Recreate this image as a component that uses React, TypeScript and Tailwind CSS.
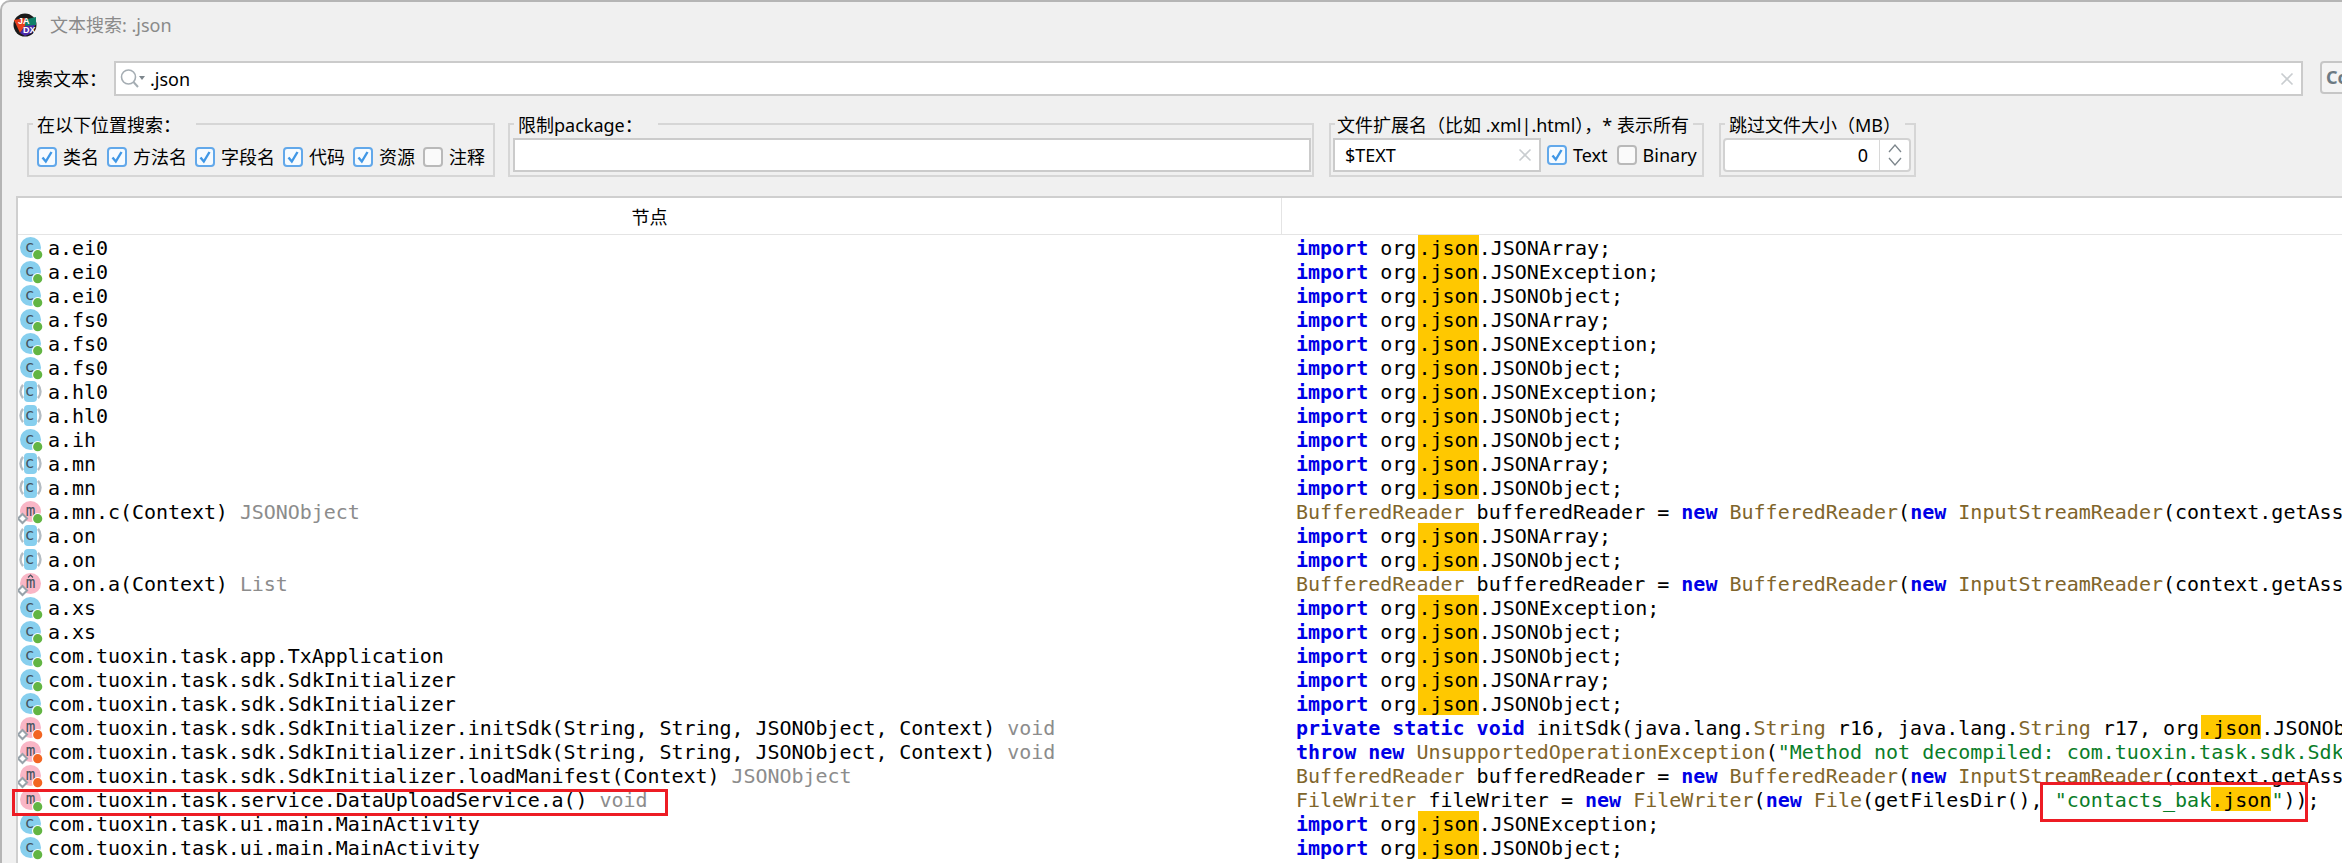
import React from 'react';

type Tok = { t: string; c?: 'k' | 'y' | 's' | 'h' | 'g' };
const k = (t: string): Tok => ({ t, c: 'k' });
const y = (t: string): Tok => ({ t, c: 'y' });
const s = (t: string): Tok => ({ t, c: 's' });
const h = (t: string): Tok => ({ t, c: 'h' });
const g = (t: string): Tok => ({ t, c: 'g' });
const p = (t: string): Tok => ({ t });

const imp = (n: string): Tok[] => [k('import'), p(' org'), g('.json'), p('.' + n + ';')];
const buffered: Tok[] = [
  y('BufferedReader'), p(' bufferedReader = '), k('new'), p(' '), y('BufferedReader'), p('('), k('new'), p(' '),
  y('InputStreamReader'), p('(context.getAssets().open("manifest.json")));'),
];

type Icon = 'c' | 'a' | 'mg' | 'mh' | 'mo' | 'mp';
const rows: { icon: Icon; name: string; ret?: string; code: Tok[] }[] = [
  { icon: 'c', name: 'a.ei0', code: imp('JSONArray') },
  { icon: 'c', name: 'a.ei0', code: imp('JSONException') },
  { icon: 'c', name: 'a.ei0', code: imp('JSONObject') },
  { icon: 'c', name: 'a.fs0', code: imp('JSONArray') },
  { icon: 'c', name: 'a.fs0', code: imp('JSONException') },
  { icon: 'c', name: 'a.fs0', code: imp('JSONObject') },
  { icon: 'a', name: 'a.hl0', code: imp('JSONException') },
  { icon: 'a', name: 'a.hl0', code: imp('JSONObject') },
  { icon: 'c', name: 'a.ih', code: imp('JSONObject') },
  { icon: 'a', name: 'a.mn', code: imp('JSONArray') },
  { icon: 'a', name: 'a.mn', code: imp('JSONObject') },
  { icon: 'mg', name: 'a.mn.c(Context)', ret: 'JSONObject', code: buffered },
  { icon: 'a', name: 'a.on', code: imp('JSONArray') },
  { icon: 'a', name: 'a.on', code: imp('JSONObject') },
  { icon: 'mh', name: 'a.on.a(Context)', ret: 'List', code: buffered },
  { icon: 'c', name: 'a.xs', code: imp('JSONException') },
  { icon: 'c', name: 'a.xs', code: imp('JSONObject') },
  { icon: 'c', name: 'com.tuoxin.task.app.TxApplication', code: imp('JSONObject') },
  { icon: 'c', name: 'com.tuoxin.task.sdk.SdkInitializer', code: imp('JSONArray') },
  { icon: 'c', name: 'com.tuoxin.task.sdk.SdkInitializer', code: imp('JSONObject') },
  {
    icon: 'mo', name: 'com.tuoxin.task.sdk.SdkInitializer.initSdk(String, String, JSONObject, Context)', ret: 'void',
    code: [k('private static void'), p(' initSdk(java.lang.'), y('String'), p(' r16, java.lang.'), y('String'), p(' r17, org'), g('.json'), p('.JSONObject r18, android.content.Context r19) {')],
  },
  {
    icon: 'mo', name: 'com.tuoxin.task.sdk.SdkInitializer.initSdk(String, String, JSONObject, Context)', ret: 'void',
    code: [k('throw new'), p(' '), y('UnsupportedOperationException'), p('('), s('"Method not decompiled: com.tuoxin.task.sdk.SdkInitializer.initSdk"'), p(');')],
  },
  { icon: 'mo', name: 'com.tuoxin.task.sdk.SdkInitializer.loadManifest(Context)', ret: 'JSONObject', code: buffered },
  {
    icon: 'mp', name: 'com.tuoxin.task.service.DataUploadService.a()', ret: 'void',
    code: [y('FileWriter'), p(' fileWriter = '), k('new'), p(' '), y('FileWriter'), p('('), k('new'), p(' '), y('File'), p('(getFilesDir(), '), s('"contacts_bak'), h('.json'), s('"'), p('));')],
  },
  { icon: 'c', name: 'com.tuoxin.task.ui.main.MainActivity', code: imp('JSONException') },
  { icon: 'c', name: 'com.tuoxin.task.ui.main.MainActivity', code: imp('JSONObject') },
];

function TreeIcon({ kind }: { kind: Icon }) {
  const isM = kind[0] === 'm';
  const dot = kind === 'mo' ? '#f26522' : kind === 'mh' || kind === 'a' ? null : '#62b543';
  return (
    <svg width="30" height="24" viewBox="0 0 30 24" className="shrink-0 overflow-visible">
      {kind === 'a' ? (
        <>
          <rect x="6" y="2" width="13" height="21" rx="4" fill="#87cfee" />
          <path d="M5 5.9 A10 10 0 0 0 5 19.1" fill="none" stroke="#b4bcc2" strokeWidth="2.4" />
          <path d="M20 5.9 A10 10 0 0 1 20 19.1" fill="none" stroke="#b4bcc2" strokeWidth="2.4" />
        </>
      ) : (
        <circle cx="12.5" cy="12.5" r="10.5" fill={isM ? '#f9b6c6' : '#87cfee'} />
      )}
      <text
        x={isM ? 12.5 : 11.5}
        y="17"
        textAnchor="middle"
        fontSize="16"
        fill="#46535e"
        fontFamily="'DejaVu Sans Mono', monospace"
      >
        {isM ? 'm' : 'c'}
      </text>
      {kind === 'mh' && <path d="M10 6.5 L12.5 4 L15 6.5" fill="none" stroke="#46535e" strokeWidth="1.2" />}
      {isM && kind !== 'mp' && (
        <path d="M4.5 15 L9 19.5 L4.5 24 L0 19.5 Z" fill="#fff" stroke="#98a3ab" strokeWidth="2" />
      )}
      {dot && (
        <>
          <circle cx="19.7" cy="19.7" r="5.7" fill="#fff" />
          <circle cx="19.7" cy="19.7" r="4.6" fill={dot} />
        </>
      )}
    </svg>
  );
}

function Code({ toks }: { toks: Tok[] }) {
  return (
    <span className="whitespace-pre">
      {toks.map((tk, i) => {
        if (tk.c === 'k') return <span key={i} className="font-bold text-[#0000e6]">{tk.t}</span>;
        if (tk.c === 'y') return <span key={i} className="text-[#80652b]">{tk.t}</span>;
        if (tk.c === 's') return <span key={i} className="text-[#0a7d28]">{tk.t}</span>;
        if (tk.c === 'h') return <span key={i} className="inline-block h-6 bg-[#ffc800]">{tk.t}</span>;
        if (tk.c === 'g') return <span key={i} className="ml-[2px] inline-block h-6 bg-[#ffc800]">{tk.t}</span>;
        return <span key={i}>{tk.t}</span>;
      })}
    </span>
  );
}

function Box({ checked, label }: { checked: boolean; label: string }) {
  return (
    <span className="flex items-center">
      <span
        className={
          checked
            ? 'flex h-5 w-5 items-center justify-center rounded-[4px] border-2 border-[#62a8ea] bg-[#f6fbff]'
            : 'h-5 w-5 rounded-[4px] border-2 border-[#b9b9b9] bg-[#fafafa]'
        }
      >
        {checked && (
          <svg width="14" height="14" viewBox="0 0 14 14">
            <path d="M2.5 7.5 L5.8 11.5 L11.5 2" fill="none" stroke="#3f97e6" strokeWidth="2.4" />
          </svg>
        )}
      </span>
      <span className="ml-[6px]">{label}</span>
    </span>
  );
}

function Legend({ children, cls }: { children: React.ReactNode; cls: string }) {
  return <legend className={'ml-[4px] h-6 whitespace-pre pl-[4px] leading-[26px] ' + cls}>{children}</legend>;
}

function Clear() {
  return (
    <svg width="14" height="14" viewBox="0 0 14 14" className="shrink-0">
      <path d="M1.5 1.5 L12.5 12.5 M12.5 1.5 L1.5 12.5" stroke="#c9cdd0" strokeWidth="1.6" />
    </svg>
  );
}

function Logo() {
  return (
    <svg width="24" height="24" viewBox="0 0 24 24" className="shrink-0">
      <circle cx="12" cy="12" r="11.5" fill="#1a1a1a" />
      <path d="M1 9 L23 4 L23 12 L12 15 Z" fill="#0f7f68" />
      <path d="M1 7 L12 5 L12 13 L7 20 Z" fill="#e8401c" />
      <path d="M7 20 L12 13 L22 12 L19 20 L12 23 Z" fill="#4b2aa8" />
      <text x="5" y="11" fontSize="9" fontWeight="700" fill="#fff" fontFamily="'Liberation Sans', sans-serif">JA</text>
      <text x="10" y="20" fontSize="9" fontWeight="700" fill="#fff" fontFamily="'Liberation Sans', sans-serif">DX</text>
    </svg>
  );
}

export default function App() {
  return (
    <div className="relative h-[863px] w-[2342px] overflow-hidden bg-white font-['Noto_Sans','Noto_Sans_CJK_SC',sans-serif] text-[18px] text-black">
      <div className="flex h-full flex-col rounded-tl-[10px] border-l-2 border-t-2 border-[#b5b5b5] bg-[#f0f0f0]">
        <div className="flex h-[59px] shrink-0 items-start pl-[11px] pt-[11px]">
          <Logo />
          <span className="ml-[13px] text-[18px] leading-6 text-[#8a8a8a]">文本搜索: .json</span>
        </div>

        <div className="flex h-[35px] shrink-0 items-center pl-[15px]">
          <span className="w-[97px] shrink-0 leading-6">搜索文本：</span>
          <div className="flex h-[35px] w-[2189px] shrink-0 items-center border-2 border-[#cbcbcb] bg-white pl-[3px] pr-[7px]">
            <svg width="30" height="26" viewBox="0 0 30 26" className="shrink-0">
              <circle cx="9.5" cy="11" r="7" fill="none" stroke="#a5adb3" strokeWidth="1.6" />
              <path d="M14.5 16 L19 21" stroke="#a5adb3" strokeWidth="2" />
              <path d="M20 10 L26 10 L23 14 Z" fill="#7d868c" />
            </svg>
            <span className="ml-[1px] flex-1 leading-6">.json</span>
            <Clear />
          </div>
          <div className="ml-[17px] flex h-[33px] w-[60px] shrink-0 items-center self-start rounded-[4px] border-2 border-[#c6c6c6] bg-[#f4f4f4] pl-[4px] font-bold text-[#6c7a83]">
            Co
          </div>
        </div>

        <div className="mt-[16px] flex h-[65px] shrink-0 items-start pl-[25px]">
          <fieldset className="h-[65px] w-[468px] shrink-0 border-2 border-[#d6d6d6]">
            <Legend cls="pr-[15px]">在以下位置搜索：</Legend>
            <div className="flex gap-2 pl-[8px] pt-[10px] leading-[22px]">
              <Box checked label="类名" />
              <Box checked label="方法名" />
              <Box checked label="字段名" />
              <Box checked label="代码" />
              <Box checked label="资源" />
              <Box checked={false} label="注释" />
            </div>
          </fieldset>
          <fieldset className="ml-[13px] h-[65px] w-[806px] shrink-0 border-2 border-[#d6d6d6]">
            <Legend cls="pr-[15px]">限制package：</Legend>
            <div className="pl-[3px] pr-[1px] pt-[2px]">
              <div className="h-[34px] border-2 border-[#cbcbcb] bg-white" />
            </div>
          </fieldset>
          <fieldset className="ml-[15px] h-[65px] w-[375px] shrink-0 border-2 border-[#d6d6d6]">
            <legend className="ml-[4px] h-6 whitespace-pre pl-[2px] pr-[4px] text-[18px] leading-[26px]">文件扩展名（比如 .xml|.html），* 表示所有</legend>
            <div className="flex items-center pl-[2px] pt-[2px] leading-[26px]">
              <div className="flex h-[34px] w-[208px] shrink-0 items-center justify-between border-2 border-[#cbcbcb] bg-white pl-[10px] pr-[7px]">
                <span>$TEXT</span>
                <Clear />
              </div>
              <div className="ml-[6px] flex items-center gap-[9px]">
                <Box checked label="Text" />
                <Box checked={false} label="Binary" />
              </div>
            </div>
          </fieldset>
          <fieldset className="ml-[15px] h-[65px] w-[197px] shrink-0 border-2 border-[#d6d6d6]">
            <Legend cls="pr-[4px]">跳过文件大小（MB）</Legend>
            <div className="pl-[2px] pr-[3px] pt-[2px]">
              <div className="flex h-[34px] rounded-[4px] border-2 border-[#d2d2d2] bg-white">
                <span className="flex flex-1 items-center justify-end pr-[11px]">0</span>
                <span className="flex w-[30px] shrink-0 flex-col items-center justify-center gap-[4px] border-l border-[#d8d8d8]">
                  <svg width="14" height="9" viewBox="0 0 14 9"><path d="M1 8 L7 1 L13 8" fill="none" stroke="#7d868c" strokeWidth="1.3" /></svg>
                  <svg width="14" height="9" viewBox="0 0 14 9"><path d="M1 1 L7 8 L13 1" fill="none" stroke="#7d868c" strokeWidth="1.3" /></svg>
                </span>
              </div>
            </div>
          </fieldset>
        </div>

        <div className="ml-[14px] mt-[19px] min-h-0 flex-1 overflow-hidden border-l-2 border-t-2 border-[#cfcfcf] bg-white">
          <div className="flex h-[37px] border-b border-[#e4e4e4]">
            <div className="flex w-[1264px] shrink-0 items-center justify-center border-r border-[#e4e4e4] pt-[2px] text-[18px]">节点</div>
          </div>
          <div className="font-['DejaVu_Sans_Mono',monospace] text-[20px] leading-[26px]">
            {rows.map((r, i) => (
              <div key={i} className="flex h-6">
                <div className="flex w-[1264px] shrink-0 overflow-visible whitespace-pre tracking-[-0.05px]">
                  <TreeIcon kind={r.icon} />
                  <span>{r.name}</span>
                  {r.ret && <span className="text-[#8c8c8c]"> {r.ret}</span>}
                </div>
                <div className="min-w-0 flex-1 overflow-x-clip pl-[14px]">
                  <Code toks={r.code} />
                </div>
              </div>
            ))}
          </div>
        </div>
      </div>
      <div className="absolute left-[12px] top-[789px] h-[27px] w-[656px] border-[3px] border-[#ed1c24]" />
      <div className="absolute left-[2040px] top-[782px] h-[40px] w-[268px] border-[3px] border-[#ed1c24]" />
    </div>
  );
}
